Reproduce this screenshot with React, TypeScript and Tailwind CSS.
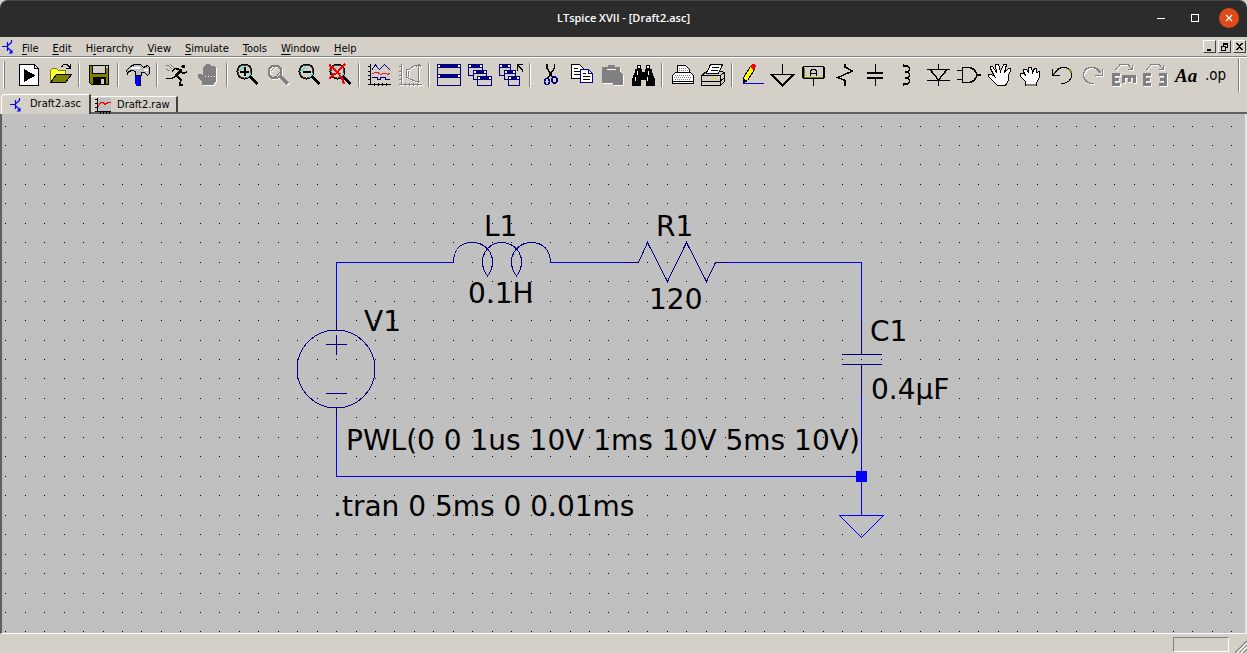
import type { ReactNode } from "react";

const K = "#000000";
const NAVY = "#000080";
const OLIVE = "#808000";

function Disabled({ children }: { children: ReactNode }) {
  return (
    <>
      <g transform="translate(1 1)" className="text-white">{children}</g>
      <g className="text-[#808080]">{children}</g>
    </>
  );
}

function Lens({ dim, children }: { dim?: boolean; children?: ReactNode }) {
  if (dim) {
    return (
      <Disabled>
        <circle cx="9" cy="9" r="6.5" fill="none" stroke="currentColor" strokeWidth="2" />
        <path d="M5 8L9 4M8 13h3l3-4" fill="none" stroke="currentColor" />
        <path d="M15 14L22 21" stroke="currentColor" strokeWidth="3" />
      </Disabled>
    );
  }
  return (
    <>
      <circle cx="9.500" cy="8.500" r="7" fill="#d4d0c8" stroke="#404040" strokeWidth="2" />
      <path d="M4.500 8L8 4M12 14h2l2-4" stroke="#40e0e0" strokeWidth="1.500" fill="none" />
      <circle cx="9.500" cy="8.500" r="7.500" fill="none" stroke={K} />
      <path d="M15.500 14L22.500 21" stroke={K} strokeWidth="3" />
      {children}
    </>
  );
}

function MiniWindow({ x, y, w, h }: { x: number; y: number; w: number; h: number }) {
  return (
    <g>
      <rect x={x + 0.5} y={y + 0.5} width={w - 1} height={h - 1} fill="#d4d0c8" stroke={NAVY} />
      <rect x={x} y={y} width={w} height="4" fill={NAVY} />
      <path d={`M${x + 1} ${y + 1}h2v2h-2zM${x + w - 3} ${y + 1}h2v2h-2z`} fill="#fff" />
    </g>
  );
}

function Axes() {
  return <path d="M3.500 1V21.500H24M1 3.500h2M1 8.500h2M1 12.500h2M1 16.500h2M7.500 20v3M11.500 20v3M15.500 20v3M19.500 20v3M1 21.500h2" fill="none" stroke="currentColor" />;
}

function LetterE({ x, flip }: { x: number; flip?: boolean }) {
  return (
    <path
      d="M0 0h8v3h-5v2h4v3h-4v2h5v3h-8z"
      transform={flip ? `translate(${x + 8} 10) scale(-1 1)` : `translate(${x} 10)`}
      fill="currentColor"
    />
  );
}

const arrowOver = <path d="M3.500 7L8 1.500H16L20.500 6.500M16 6.500H20.500V2" fill="none" stroke="currentColor" />;

const groups: { label: string; art: ReactNode }[][] = [
  [
    {
      label: "New schematic",
      art: (
        <>
          <path d="M2.500 1.500H17.500L21.500 5.500V22.500H2.500Z" fill="#fff" stroke={K} />
          <path d="M17.500 1.500V5.500H21.500" fill="none" stroke={K} />
          <path d="M7 6L18.500 12.500L7 19Z" fill={K} />
        </>
      ),
    },
    {
      label: "Open",
      art: (
        <>
          <path d="M2.500 19V7.500L4.500 5.500H8.500L10.500 7.500H17.500V11.500H8.500Z" fill="#ffff40" stroke={OLIVE} />
          <path d="M8.500 11.500H23.500L17.500 19.500H2.500Z" fill={OLIVE} stroke={K} />
          <path d="M13.500 4L15.500 1.500H19L22.500 5M22.500 1V5.500H18" fill="none" stroke={K} />
        </>
      ),
    },
  ],
  [
    {
      label: "Save",
      art: (
        <>
          <path d="M2.500 2.500H21.500V21.500H4.500L2.500 19.500Z" fill={OLIVE} stroke={K} />
          <rect x="5.500" y="2.500" width="13" height="8" fill="#d4d0c8" stroke={K} />
          <rect x="19" y="3" width="2" height="2" fill="#d4d0c8" />
          <path d="M6 14h13v8H6z" fill={K} />
          <path d="M14 16h3v5h-3z" fill="#d4d0c8" />
        </>
      ),
    },
  ],
  [
    {
      label: "Control panel",
      art: (
        <>
          <path d="M9 12h6v11h-5v-2h-1z" fill="#0000ff" />
          <path d="M13 12h2v11h-2z" fill={NAVY} />
          <path d="M.5 7.500L4.500 3.500L8.500 1.500H14.500L17.500 4.500L21.500 2.500L23.500 4.500V10.500L21.500 12.500L18.500 9.500H15.500V12.500H9.500V8.500L6.500 7.500L2.500 8.500L1.500 10.500Z" fill="#c0c0c0" stroke={K} />
          <path d="M5 4.500h9M18 6.500h4" stroke="#fff" strokeWidth="2" />
        </>
      ),
    },
  ],
  [
    {
      label: "Run",
      art: (
        <>
          <path d="M1 2l3 1l3 3M1 6l4 2M5 1l4 4h3" fill="none" stroke="#808080" />
          <circle cx="18.500" cy="3.500" r="2" fill={K} />
          <path d="M16 7L11 13" stroke={K} strokeWidth="3" />
          <path d="M17 7L10 5.500L7 8.500M16 9L19 10.500L22 8.500M11 13L7 15.500H1M12 13L16 17L14.500 22H18" fill="none" stroke={K} strokeWidth="1.500" />
        </>
      ),
    },
    {
      label: "Halt",
      art: (
        <Disabled>
          <path d="M6 22V18L2 15V11H5L7 13V4L9 3L10 1H14L15 3H18L20 5V18L18 20V22Z" fill="currentColor" />
          <path d="M9 13.500h11" stroke="#fff" strokeDasharray="1 2" />
        </Disabled>
      ),
    },
  ],
  [
    { label: "Zoom in", art: <Lens><path d="M5 8.500h9M9.500 4v9" stroke={K} strokeWidth="2" /></Lens> },
    { label: "Pan", art: <Lens dim /> },
    { label: "Zoom out", art: <Lens><path d="M6 8.500h8" stroke={K} strokeWidth="2" /></Lens> },
    {
      label: "Zoom full extents",
      art: (
        <Lens>
          <path d="M1 2L5 5L9 9L14 15L16 21M17 1L12 6L9 10L5 12L1 16" fill="none" stroke="#ff0000" strokeWidth="2" />
          <path d="M1 6h3M2 1v4M4 10h9" stroke="#ff0000" />
        </Lens>
      ),
    },
  ],
  [
    {
      label: "Plot settings",
      art: (
        <>
          <g className="text-black"><Axes /></g>
          <path d="M5 6.500L8.500 2L12.500 6.500L17.500 1.500L23 7" fill="none" stroke={NAVY} />
          <path d="M5 10.500L10 9L14 11.500L18 10L21 11.500L23 10" fill="none" stroke="#e02020" />
          <path d="M5 14.500H10V16.500H13V14.500H18V16.500H23" fill="none" stroke={NAVY} />
        </>
      ),
    },
    {
      label: "FFT",
      art: (
        <Disabled>
          <Axes />
          <path d="M22 2L16 3L12 6L8 7V14L12 16L17 18L22 19M20.500 1V20M18 4l3-3l2 3M10 8v6" fill="none" stroke="currentColor" />
        </Disabled>
      ),
    },
  ],
  [
    {
      label: "Tile windows",
      art: (
        <>
          <MiniWindow x={0} y={1} w={24} h={11} />
          <MiniWindow x={0} y={11} w={24} h={12} />
        </>
      ),
    },
    {
      label: "Cascade windows",
      art: (
        <>
          <MiniWindow x={0} y={1} w={15} h={12} />
          <MiniWindow x={5} y={7} w={14} h={10} />
          <MiniWindow x={9} y={13} w={15} h={10} />
        </>
      ),
    },
    {
      label: "Close all windows",
      art: (
        <>
          <MiniWindow x={0} y={1} w={12} h={12} />
          <MiniWindow x={5} y={7} w={12} h={10} />
          <MiniWindow x={9} y={13} w={12} h={10} />
          <path d="M18.500 8V1.500H24M18.500 2L23.500 7V9" fill="none" stroke={K} strokeWidth="1.500" />
        </>
      ),
    },
  ],
  [
    {
      label: "Cut",
      art: (
        <>
          <path d="M9 1V5L14.500 14M16.500 1V5L10 15" fill="none" stroke={K} strokeWidth="1.500" />
          <ellipse cx="9" cy="18.500" rx="2.500" ry="3" fill="none" stroke={NAVY} strokeWidth="1.500" />
          <ellipse cx="16.500" cy="17" rx="2.500" ry="3" fill="none" stroke={NAVY} strokeWidth="1.500" />
        </>
      ),
    },
    {
      label: "Copy",
      art: (
        <>
          <path d="M2.500 1.500H10.500L14.500 5.500V15.500H2.500Z" fill="#fff" stroke={K} />
          <path d="M5 5.500h4M5 8.500h6M5 11.500h6" stroke={K} />
          <path d="M11.500 6.500H19.500L23.500 10.500V19.500H11.500Z" fill="#fff" stroke={NAVY} />
          <path d="M19.500 6.500V10.500H23.500" fill="none" stroke={NAVY} />
          <path d="M14 10.500h3M14 13.500h7M14 16.500h7" stroke={K} />
        </>
      ),
    },
    {
      label: "Paste",
      art: (
        <Disabled>
          <path d="M2 4H8V2H15V4H20V9L23 12V22H13V20H2Z" fill="currentColor" />
          <path d="M7 6.500H16" stroke="#fff" />
        </Disabled>
      ),
    },
    {
      label: "Find",
      art: (
        <>
          <path d="M6 2h4v4h1v3h3V6h1V2h4v4h2v3l3 7v7h-9v-6h-5v6H1v-7l3-7V6h2z" fill={K} />
          <path d="M7 3h2v2H7zM16 3h2v2h-2zM6 8h1v4H6zM17 8h1v4h-1zM4 14h1v4H4zM16 14h1v4h-1z" fill="#fff" />
        </>
      ),
    },
  ],
  [
    {
      label: "Print setup",
      art: (
        <>
          <path d="M7.500 10V2.500H15.500L19.500 6.500V10" fill="#fff" stroke={K} />
          <path d="M5.500 9.500H20.500L23.500 12.500V20.500H2.500V12.500Z" fill="#fff" stroke={K} />
          <path d="M9 5.500h8M9 7.500h9M5 12.500h16M4 14.500h18M5 16.500h16" stroke="#808080" strokeDasharray="1 1" />
          <path d="M2.500 18.500h21" stroke={K} />
        </>
      ),
    },
    {
      label: "Print",
      art: (
        <>
          <path d="M.5 12.500L5.500 8.500H20.500L23.500 9.500V18.500L19.500 22.500H.5Z" fill="#d4d0c8" stroke={K} />
          <path d="M5.500 10.500L9.500 1.500H21.500L17.500 10.500Z" fill="#fff" stroke={K} />
          <path d="M.5 12.500H19.500L23.500 9M19.500 12.500V22.500M.5 18.500H19L23.500 14.500M11 4.500h7M10 7.500h7" fill="none" stroke={K} />
          <path d="M10 15.500h5" stroke="#e0e000" />
        </>
      ),
    },
  ],
  [
    {
      label: "Draw wire",
      art: (
        <>
          <path d="M3.500 19.500V14.500L10.500 3.500L14.500 6.500L7.500 17.500Z" fill="#ffff00" stroke={K} />
          <path d="M3 20v-5l4 3z" fill={K} />
          <path d="M10 4l2-3h3l1 2l-2 4z" fill="#ff0000" />
          <path d="M3 20.500h21" stroke="#0000ff" />
        </>
      ),
    },
    { label: "Place ground", art: <path d="M11.500 1V11.500M.5 11.500H22.500L11.500 22.500Z" fill="none" stroke={K} strokeWidth="1.500" /> },
    {
      label: "Label net",
      art: (
        <>
          <rect x="1" y="3.500" width="21" height="12" rx="2" fill="none" stroke={K} strokeWidth="1.500" />
          <path d="M2.500 5v9h18" fill="none" stroke={OLIVE} />
          <path d="M8.500 13V8L10.500 6.500H12.500L14.500 8V13M8.500 10.500h6M11.500 16v7" fill="none" stroke={K} strokeWidth="1.200" />
        </>
      ),
    },
    { label: "Resistor", art: <path d="M12 1V4L19.500 8L5 14.500L12 17.500V23" fill="none" stroke={K} strokeWidth="1.500" /> },
    {
      label: "Capacitor",
      art: (
        <>
          <path d="M3 9h16v2H3zM3 14h16v2H3z" fill={K} />
          <path d="M11 1h1v8h-1zM11 16h1v7h-1z" fill={K} />
        </>
      ),
    },
    {
      label: "Inductor",
      art: <path d="M8.500 1V3H12L14.500 5V7L12 9H9.500H12L14.500 11V13L12 15H9.500H12L14.500 17V19L12 21H8.500V23" fill="none" stroke={K} strokeWidth="1.500" />,
    },
    {
      label: "Diode",
      art: <path d="M12.500 1V6.500M1 6.500H24M4 6.500L12.500 17L21 6.500M1 17.500H24M12.500 17V23" fill="none" stroke={K} strokeWidth="1.500" />,
    },
    {
      label: "Component",
      art: <path d="M0 7.500h6M0 16.500h6M5.500 4.500H13L17 6.500L19.500 10V14L17 17.500L13 19.500H5.500ZM19 12h5" fill="none" stroke={K} strokeWidth="1.500" />,
    },
    {
      label: "Move",
      art: (
        <path d="M9.500 22.500L4.500 17.500L.5 13.500V11.500H3.500L6.500 13.500L2.500 5.500V3.500H4.500L8.500 9.500L7.500 1.500H10.500L12.500 8.500L15.500 1.500H18.500L16.500 9.500L20.500 5.500H22.500V7.500L20.500 12.500V17.500L17.500 22.500Z" fill="#fff" stroke={K} />
      ),
    },
    {
      label: "Drag",
      art: (
        <>
          <path d="M6.500 22.500V18.500L1.500 13.500V10.500H4.500L6.500 12.500L4.500 8.500V6.500H7.500L9.500 9.500V4.500H12.500L13.500 9.500L15.500 5.500H17.500V9.500L20.500 8.500V14.500L17.500 19.500V22.500Z" fill="#fff" stroke={K} />
          <path d="M7 21.500h10" stroke="#808080" strokeWidth="2" />
        </>
      ),
    },
    {
      label: "Undo",
      art: (
        <>
          <path d="M4 11L8 6L12 4.500H16L20 7L21.500 10" fill="none" stroke={OLIVE} strokeWidth="1.500" />
          <path d="M5 9L9 5.500L12 4.500H16L19 6M21.500 10V14L19 18L14 20.500H11M2.500 6V12.500H10M3 12L8 7" fill="none" stroke={K} />
        </>
      ),
    },
    {
      label: "Redo",
      art: (
        <Disabled>
          <path d="M20 10L16 6L13 4.500H9L5 6L2.500 10V14L5 18L9 20.500H13M21.500 6V12.500H14" fill="none" stroke="currentColor" strokeWidth="1.500" />
        </Disabled>
      ),
    },
    {
      label: "Rotate",
      art: (
        <Disabled>
          {arrowOver}
          <LetterE x={0} />
          <path d="M10 12h14v8h-3v-5h-2v4h-3v-4h-3v5h-3z" fill="currentColor" />
        </Disabled>
      ),
    },
    {
      label: "Mirror",
      art: (
        <Disabled>
          {arrowOver}
          <LetterE x={0} />
          <LetterE x={16} flip />
        </Disabled>
      ),
    },
    {
      label: "Text",
      art: (
        <text x="1" y="19" fontSize="19" className="font-['Liberation_Serif',serif] font-bold italic">
          Aa
        </text>
      ),
    },
    {
      label: "SPICE directive",
      art: (
        <text x="0" y="17" fontSize="15" className="font-['DejaVu_Sans_Condensed','DejaVu_Sans',sans-serif]">
          .op
        </text>
      ),
    },
  ],
];

function TransistorIcon() {
  return (
    <svg className="h-4 w-3 shrink-0" viewBox="0 0 12 16" fill="none" stroke="#0000ff" aria-hidden="true">
      <path d="M0 7.500h5M5.500 3v9M6 6.500L9.500 3.500V1M6 9l4 4" strokeWidth="1.200" />
      <path d="M10.500 10.500v4h-4z" fill="#0000ff" stroke="none" />
    </svg>
  );
}

function PlotIcon() {
  return (
    <svg className="h-4 w-4 shrink-0" viewBox="0 0 16 16" fill="none" shapeRendering="crispEdges" aria-hidden="true">
      <path d="M3 0h13v13H3z" fill="#c0c0c0" />
      <path d="M2.500 0v13.500H16M0 1.500h2M0 5.500h2M0 9.500h2M0 13.500h2M5.500 14v2M8.500 14v2M11.500 14v2M14.500 14v2" stroke={K} />
      <path d="M3 8.500L6 4.500H8L10 6.500L13 4.500H16" stroke="#ff0000" strokeWidth="1.200" />
    </svg>
  );
}

const PITCH = 19.46;

function gridPath() {
  let d = "";
  for (let r = 0; r < 60; r++) {
    const y = Math.round(125.5 + r * PITCH);
    for (let c = 0; c < 110; c++) d += `M${Math.round(5.23 + c * PITCH)} ${y}h1v1h-1z`;
  }
  return d;
}
const GRID = gridPath();

const labels = [
  { x: 484, y: 236, t: "L1" },
  { x: 468, y: 303, t: "0.1H" },
  { x: 364, y: 331, t: "V1" },
  { x: 656, y: 236, t: "R1" },
  { x: 649, y: 309, t: "120" },
  { x: 870, y: 341, t: "C1" },
  { x: 871, y: 399, t: "0.4µF" },
  { x: 346, y: 450, t: "PWL(0 0 1us 10V 1ms 10V 5ms 10V)" },
  { x: 333, y: 516, t: ".tran 0 5ms 0 0.01ms" },
];

function Schematic() {
  return (
    <svg className="block h-0 w-full min-w-0 flex-1 bg-[#c0c0c0]" role="img" aria-label="Circuit schematic">
      <g transform="translate(-2 -114)">
        <path d={GRID} fill={K} shapeRendering="crispEdges" />
        <g fill="none" stroke="#0000ff" shapeRendering="crispEdges">
          <path d="M336.500 321V262.500H453M551 262.500H630M725 262.500H861.500V321M861.500 398V515M336.500 417V476.500H861M839 515.500H884M839.500 515.500L861.500 537.500L883.500 515.500" />
          <rect x="856" y="471" width="11" height="11" fill="#0000ff" stroke="none" />
        </g>
        <g fill="none" stroke={NAVY} shapeRendering="crispEdges">
          <circle cx="336" cy="369" r="39" />
          <path d="M336.500 320V330M336.500 408V418M326 344.500H347M336.500 335V355M326 393.500H347" />
          <path d="M453.500 263C453.500 249 461 242.500 472.500 242.500C484 242.500 492.500 251 492.500 262C492.500 268 490 273 487 276.500" />
          <path d="M488 276.500C485 273 482.500 268 482.500 262C482.500 251 491 242.500 501.500 242.500C513 242.500 521.500 251 521.500 262C521.500 268 519 273 516 276.500" />
          <path d="M517 276.500C514 273 511.500 268 511.500 262C511.500 251 520 242.500 531.500 242.500C543 242.500 550.500 250 550.500 263" />
          <path d="M629 262.500H638.500L647.500 242.500L667.500 281.500L686.500 242.500L706.500 281.500L715.500 262.500H725" />
          <path d="M861.500 320V354M842 354.500H882M842 364.500H882M861.500 364V398" />
        </g>
        <g fontSize="28" className="font-['DejaVu_Sans',sans-serif]">
          {labels.map((l) => (
            <text key={l.t} x={l.x} y={l.y}>
              {l.t}
            </text>
          ))}
        </g>
      </g>
    </svg>
  );
}

const menus: [string, string, string][] = [
  ["", "F", "ile"],
  ["", "E", "dit"],
  ["H", "i", "erarchy"],
  ["", "V", "iew"],
  ["", "S", "imulate"],
  ["", "T", "ools"],
  ["", "W", "indow"],
  ["", "H", "elp"],
];

const childButtons = [
  { label: "Minimize document", d: "M3 9h5v2H3z" },
  { label: "Restore document", d: "M4 2h6v6H8v3H2V5h2zM5 4v1h3v2h1V4zM3 7v3h4V7z" },
  { label: "Close document", d: "M2 2h2l2 2l2-2h2v1L7 6l3 3v1H8L6 8l-2 2H2V9l3-3l-3-3z" },
];

export default function App() {
  return (
    <div className="flex h-screen flex-col overflow-hidden bg-[#d4d0c8] font-['DejaVu_Sans_Condensed','DejaVu_Sans',sans-serif] text-[11px] text-black">
      <header className="grid h-[37px] shrink-0 grid-cols-3 items-center rounded-t-lg border-t border-[#454545] bg-[#2c2c2c] pb-0.5 text-white">
        <h1 className="col-start-2 text-center font-['Open_Sans','Noto_Sans',sans-serif] text-[11px] font-semibold">LTspice XVII - [Draft2.asc]</h1>
        <div className="flex items-center justify-end gap-3.5 pr-2">
          <button aria-label="Minimize" className="flex size-5 items-center justify-center">
            <span className="h-px w-2 bg-white" />
          </button>
          <button aria-label="Maximize" className="flex size-5 items-center justify-center">
            <span className="size-2 border border-white" />
          </button>
          <button aria-label="Close" className="flex size-5 items-center justify-center rounded-full bg-[#e04b1a]">
            <svg className="size-2" viewBox="0 0 8 8" stroke="#fff" strokeWidth="1.200" aria-hidden="true">
              <path d="M1 1l6 6M7 1L1 7" />
            </svg>
          </button>
        </div>
      </header>

      <nav className="flex h-5 shrink-0 items-center border-b border-[#808080] pl-0.5" aria-label="Menu">
        <TransistorIcon />
        <div className="flex flex-1 gap-0.5 pl-0.5 pt-1">
          {menus.map(([a, u, b]) => (
            <button key={a + u + b} className="px-1.5 leading-4">
              {a}
              <span className="underline underline-offset-2">{u}</span>
              {b}
            </button>
          ))}
        </div>
        <div className="flex gap-0.5 pr-px">
          {childButtons.map((b) => (
            <button key={b.label} aria-label={b.label} className="size-[13px] border border-t-white border-l-white border-r-[#404040] border-b-[#404040] bg-[#d4d0c8]">
              <svg className="block size-full" viewBox="0 0 12 12" shapeRendering="crispEdges" aria-hidden="true">
                <path d={b.d} fillRule="evenodd" />
              </svg>
            </button>
          ))}
        </div>
      </nav>

      <div className="flex h-[37px] shrink-0 items-center border-t border-white pb-0.5 pl-[3px]" role="toolbar" aria-label="Tools">
        <span className="mr-2 h-7 w-0.5 border-l border-r border-l-white border-r-[#808080]" />
        {groups.map((g, i) => (
          <div key={g[0].label} className="flex items-center">
            {i > 0 && <span className="mx-[3px] h-6 w-0.5 border-l border-r border-l-[#808080] border-r-white" />}
            {g.map((tool) => (
              <button key={tool.label} aria-label={tool.label} className="flex h-7 w-[31px] items-center justify-center">
                <svg className="size-6 overflow-visible" viewBox="0 0 24 24" shapeRendering="crispEdges" aria-hidden="true">
                  {tool.art}
                </svg>
              </button>
            ))}
          </div>
        ))}
        <span className="ml-[6px] h-[34px] w-0.5 border-l border-r border-l-[#808080] border-r-white" />
      </div>

      <div className="flex h-5 shrink-0 items-stretch" role="tablist">
        <button role="tab" aria-selected="true" className="ml-px flex items-center gap-2 rounded-tl-sm border-l border-r-2 border-t border-l-white border-r-[#404040] border-t-white px-2">
          <TransistorIcon />
          Draft2.asc
        </button>
        <div className="flex flex-1 border-b-2 border-[#606060] pt-0.5">
          <button role="tab" aria-selected="false" className="flex items-center gap-1.5 border-r-2 border-t border-r-[#404040] border-t-white pl-1 pr-1.5 pt-0.5">
            <PlotIcon />
            Draft2.raw
          </button>
        </div>
      </div>

      <main className="flex min-h-0 flex-1 flex-col border-b border-l-2 border-r-2 border-b-white border-l-[#606060] border-r-[#e8e6e0]">
        <Schematic />
      </main>

      <footer className="flex h-[19px] shrink-0 justify-end gap-1.5 pt-[3px]">
        <div className="mb-px w-14 border border-b-white border-l-[#808080] border-r-white border-t-[#808080]" />
        <svg className="mt-auto size-3" viewBox="0 0 12 12" stroke="#808080" strokeWidth="1.500" aria-hidden="true">
          <path d="M0 12L12 0M4 12L12 4M8 12L12 8" />
          <path d="M2 12L12 2M6 12L12 6" stroke="#fff" />
        </svg>
      </footer>
    </div>
  );
}
